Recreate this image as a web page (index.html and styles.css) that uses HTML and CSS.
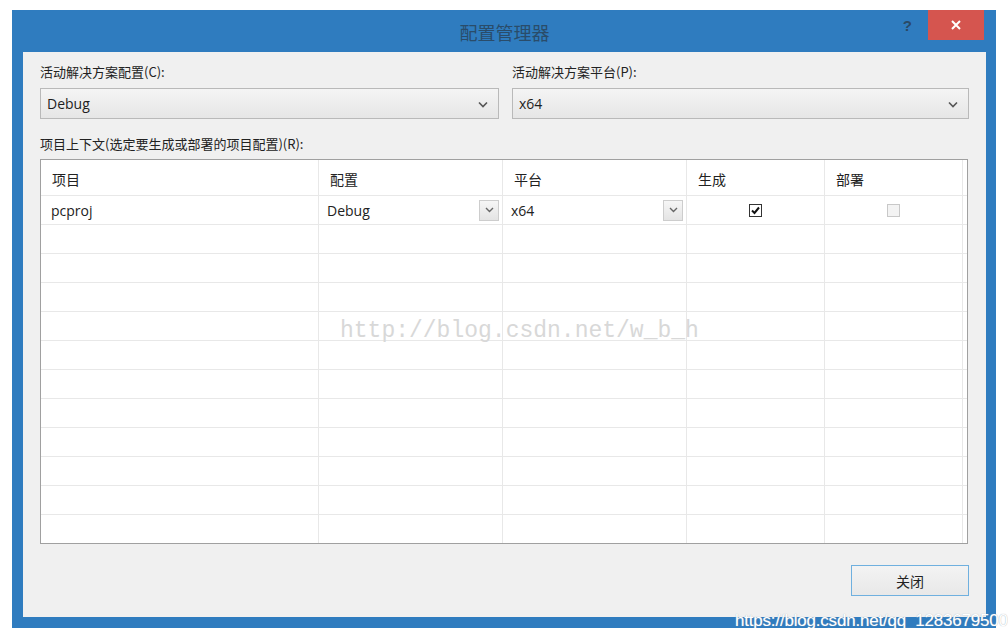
FILE: index.html
```html
<!DOCTYPE html>
<html lang="zh">
<head>
<meta charset="utf-8">
<title>配置管理器</title>
<link rel="stylesheet" href="styles.css">
</head>
<body>
<div class="window">
  <div class="titlebar">
    <div class="title">配置管理器</div>
    <div class="help">?</div>
    <div class="close">
      <svg width="12" height="12" viewBox="0 0 12 12"><path d="M2 2 L10 10 M10 2 L2 10" stroke="#fff" stroke-width="2" fill="none"/></svg>
    </div>
  </div>
  <div class="content">
    <div class="top">
      <div class="field">
        <div class="label">活动解决方案配置(C):</div>
        <div class="combo"><span>Debug</span><svg class="chev" width="10" height="7" viewBox="0 0 10 7"><path d="M1 1.5 L5 5.5 L9 1.5" stroke="#555" stroke-width="1.6" fill="none"/></svg></div>
      </div>
      <div class="field">
        <div class="label">活动解决方案平台(P):</div>
        <div class="combo"><span>x64</span><svg class="chev" width="10" height="7" viewBox="0 0 10 7"><path d="M1 1.5 L5 5.5 L9 1.5" stroke="#555" stroke-width="1.6" fill="none"/></svg></div>
      </div>
    </div>
    <div class="label ctx">项目上下文(选定要生成或部署的项目配置)(R):</div>
    <div class="table">
      <div class="row head">
        <div class="cell">项目</div>
        <div class="cell">配置</div>
        <div class="cell">平台</div>
        <div class="cell">生成</div>
        <div class="cell">部署</div>
        <div class="cell"></div>
      </div>
      <div class="row">
        <div class="cell">pcproj</div>
        <div class="cell sel"><span>Debug</span><div class="dd"><svg width="9" height="6" viewBox="0 0 9 6"><path d="M1 1 L4.5 4.5 L8 1" stroke="#666" stroke-width="1.4" fill="none"/></svg></div></div>
        <div class="cell sel"><span>x64</span><div class="dd"><svg width="9" height="6" viewBox="0 0 9 6"><path d="M1 1 L4.5 4.5 L8 1" stroke="#666" stroke-width="1.4" fill="none"/></svg></div></div>
        <div class="cell center"><div class="chk"><svg width="11" height="11" viewBox="0 0 11 11"><path d="M2 5.5 L4.5 8 L9 2.5" stroke="#111" stroke-width="2" fill="none"/></svg></div></div>
        <div class="cell center"><div class="chk off"></div></div>
        <div class="cell"></div>
      </div>
      <div class="row"><div class="cell"></div><div class="cell"></div><div class="cell"></div><div class="cell"></div><div class="cell"></div><div class="cell"></div></div>
      <div class="row"><div class="cell"></div><div class="cell"></div><div class="cell"></div><div class="cell"></div><div class="cell"></div><div class="cell"></div></div>
      <div class="row"><div class="cell"></div><div class="cell"></div><div class="cell"></div><div class="cell"></div><div class="cell"></div><div class="cell"></div></div>
      <div class="row"><div class="cell"></div><div class="cell"></div><div class="cell"></div><div class="cell"></div><div class="cell"></div><div class="cell"></div></div>
      <div class="row"><div class="cell"></div><div class="cell"></div><div class="cell"></div><div class="cell"></div><div class="cell"></div><div class="cell"></div></div>
      <div class="row"><div class="cell"></div><div class="cell"></div><div class="cell"></div><div class="cell"></div><div class="cell"></div><div class="cell"></div></div>
      <div class="row"><div class="cell"></div><div class="cell"></div><div class="cell"></div><div class="cell"></div><div class="cell"></div><div class="cell"></div></div>
      <div class="row"><div class="cell"></div><div class="cell"></div><div class="cell"></div><div class="cell"></div><div class="cell"></div><div class="cell"></div></div>
      <div class="row"><div class="cell"></div><div class="cell"></div><div class="cell"></div><div class="cell"></div><div class="cell"></div><div class="cell"></div></div>
      <div class="row"><div class="cell"></div><div class="cell"></div><div class="cell"></div><div class="cell"></div><div class="cell"></div><div class="cell"></div></div>
      <div class="row last"><div class="cell"></div><div class="cell"></div><div class="cell"></div><div class="cell"></div><div class="cell"></div><div class="cell"></div></div>
      <div class="wm">http://blog.csdn.net/w_b_h</div>
    </div>
    <div class="footer">
      <button class="btn">关闭</button>
    </div>
  </div>
  <div class="wm2">https://blog.csdn.net/qq_1283679500</div>
</div>
</body>
</html>
```

FILE: styles.css
```css
html, body {
  margin: 0;
  padding: 0;
  background: #ffffff;
}
body {
  font-family: "Open Sans", "Noto Sans CJK SC", sans-serif;
  font-size: 14px;
  color: #1e1e1e;
}
.window {
  position: relative;
  margin: 10px 0 0 12px;
  width: 984px;
  height: 618px;
  background: #2f7cbf;
  box-sizing: border-box;
  padding: 0 10px 11px 11px;
  display: flex;
  flex-direction: column;
}
.titlebar {
  height: 42px;
  flex: none;
  position: relative;
}
.title {
  position: absolute;
  left: 0;
  right: 0;
  top: 10px;
  text-align: center;
  font-family: "Noto Sans CJK SC", sans-serif;
  font-size: 18px;
  color: #2a4c6a;
  line-height: 24px;
}
.help {
  position: absolute;
  right: 74px;
  top: 7px;
  font-family: "Liberation Sans", sans-serif;
  font-weight: bold;
  font-size: 15px;
  color: #2a4a66;
}
.close {
  position: absolute;
  right: 2px;
  top: 0;
  width: 56px;
  height: 30px;
  background: #d5554f;
  display: flex;
  align-items: center;
  justify-content: center;
}
.content {
  flex: 1;
  background: #f0f0f0;
  padding: 0 17px;
  display: flex;
  flex-direction: column;
}
.top {
  display: flex;
  gap: 13px;
  margin-top: 10px;
}
.field {
  flex: 1;
}
.field + .field {
  flex: none;
  width: 457px;
}
.label {
  font-family: "Noto Sans CJK SC", sans-serif;
  font-size: 13px;
  color: #222;
  line-height: 20px;
  height: 20px;
}
.combo {
  margin-top: 6px;
  height: 31px;
  box-sizing: border-box;
  border: 1px solid #b9b9b9;
  background: linear-gradient(#f4f4f4, #e6e6e6);
  display: flex;
  align-items: center;
  justify-content: space-between;
  padding: 0 10px 0 6px;
  font-size: 14px;
}
.chev {
  margin-top: 1px;
}
.ctx {
  margin-top: 15px;
}
.table {
  position: relative;
  margin-top: 5px;
  width: 928px;
  height: 385px;
  box-sizing: border-box;
  border: 1px solid #a0a0a0;
  background: #fff;
  overflow: hidden;
}
.row {
  display: grid;
  grid-template-columns: 278px 184px 184px 138px 138px 1fr;
  height: 29px;
}
.row.head {
  height: 36px;
}
.row.last {
  height: 28px;
}
.cell {
  border-right: 1px solid #e8e8e8;
  border-bottom: 1px solid #e8e8e8;
  display: flex;
  align-items: center;
  padding: 0 10px;
  font-size: 14px;
  color: #222;
  min-width: 0;
}
.row.last .cell {
  border-bottom: none;
}
.row .cell:last-child {
  border-right: none;
}
.head .cell {
  font-family: "Noto Sans CJK SC", sans-serif;
  font-size: 14px;
  padding-left: 11px;
  padding-top: 2px;
}
.cell.sel {
  justify-content: space-between;
  padding-right: 3px;
  padding-left: 8px;
}
.dd {
  width: 20px;
  height: 21px;
  box-sizing: border-box;
  border: 1px solid #cdcdcd;
  background: linear-gradient(#f6f6f6, #e4e4e4);
  display: flex;
  align-items: center;
  justify-content: center;
}
.cell.center {
  justify-content: center;
}
.chk {
  width: 13px;
  height: 13px;
  box-sizing: border-box;
  border: 1px solid #333;
  background: #fff;
  display: flex;
  align-items: center;
  justify-content: center;
}
.chk.off {
  border-color: #c8c8c8;
  background: #f3f3f3;
}
.wm {
  position: absolute;
  left: 299px;
  top: 158px;
  font-family: "Liberation Mono", monospace;
  font-size: 23px;
  color: #d8d8d8;
  pointer-events: none;
}
.footer {
  display: flex;
  justify-content: flex-end;
  margin-top: 21px;
}
.btn {
  width: 118px;
  height: 31px;
  border: 1px solid #6fb0df;
  background: linear-gradient(#f3f3f3, #e8e8e8);
  font-family: "Noto Sans CJK SC", sans-serif;
  font-size: 14px;
  color: #222;
  padding: 0;
}
.wm2 {
  position: absolute;
  left: 723px;
  top: 601px;
  font-family: "Liberation Sans", sans-serif;
  font-size: 17px;
  letter-spacing: -0.2px;
  color: #ffffff;
  text-shadow: 0 0 1px #9aa8b5;
  white-space: nowrap;
}
```
